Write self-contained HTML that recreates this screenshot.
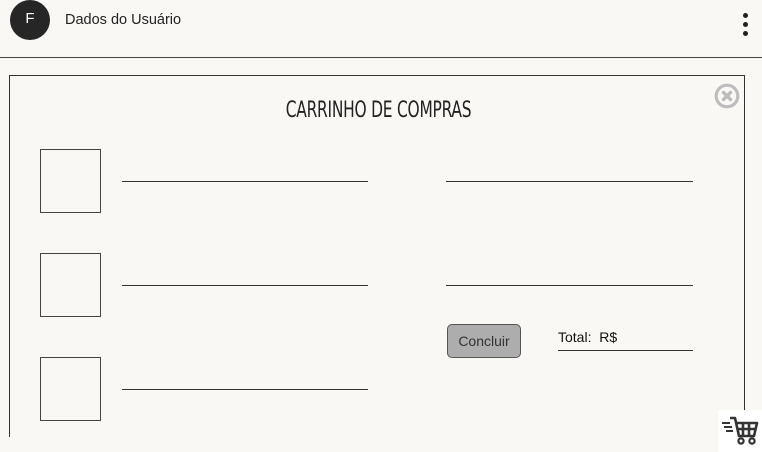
<!DOCTYPE html>
<html><head><meta charset="utf-8"><style>
html,body{margin:0;padding:0;width:762px;height:452px;background:#f9f8f4;overflow:hidden;font-family:"Liberation Sans",sans-serif;position:relative}
.a{position:absolute}
.line{position:absolute;height:0;border-top:1.3px solid #333}
.box{position:absolute;width:61px;height:64px;border:1.3px solid #444;box-sizing:border-box}
</style></head><body>
<div class="a" style="left:10px;top:0;width:40px;height:40px;border-radius:50%;background:#262626;color:#fff;font-size:15px;line-height:38px;text-align:center">F</div>
<div class="a" style="left:65px;top:12px;font-size:14.5px;color:#222">Dados do Usuário</div>
<div class="a" style="left:743px;top:13px;width:5px;height:5px;border-radius:50%;background:#222"></div>
<div class="a" style="left:743px;top:22px;width:5px;height:5px;border-radius:50%;background:#222"></div>
<div class="a" style="left:743px;top:31px;width:5px;height:5px;border-radius:50%;background:#222"></div>
<div class="line" style="left:0;top:57px;width:762px;border-top:1.5px solid #444"></div>
<div class="a" style="left:9px;top:75px;width:736px;height:362px;border:1.3px solid #333;border-bottom:none;box-sizing:border-box"></div>
<div class="a" style="left:0;top:98px;width:757px;text-align:center;font-family:'DejaVu Sans Condensed','Liberation Sans Narrow',sans-serif;font-size:22px;color:#222;letter-spacing:-0.3px;transform:scaleX(0.78)">CARRINHO DE COMPRAS</div>
<svg class="a" style="left:714px;top:83px" width="26" height="26" viewBox="0 0 26 26"><circle cx="13" cy="13" r="10.8" fill="none" stroke="#bdbdbd" stroke-width="3.2"/><path d="M9.5 9.5L16.5 16.5M16.5 9.5L9.5 16.5" stroke="#bdbdbd" stroke-width="3.4" stroke-linecap="round"/></svg>
<div class="box" style="left:40px;top:149px"></div>
<div class="box" style="left:40px;top:253px"></div>
<div class="box" style="left:40px;top:357px"></div>
<div class="line" style="left:122px;top:181px;width:246px"></div>
<div class="line" style="left:122px;top:285px;width:246px"></div>
<div class="line" style="left:122px;top:389px;width:246px"></div>
<div class="line" style="left:446px;top:181px;width:247px"></div>
<div class="line" style="left:446px;top:285px;width:247px"></div>
<div class="a" style="left:447px;top:324px;width:74px;height:34px;box-sizing:border-box;border:1px solid #555;border-radius:5px;background:#adadad;color:#333;font-size:14px;line-height:32px;text-align:center">Concluir</div>
<div class="a" style="left:558px;top:329px;font-size:14px;color:#111">Total:&nbsp; R$</div>
<div class="line" style="left:558px;top:350px;width:135px"></div>
<div class="a" style="left:718px;top:410px;width:44px;height:42px;background:#fff"></div>
<svg class="a" style="left:721px;top:414px" width="38" height="32" viewBox="0 0 38 32"><g stroke="#333" stroke-width="2.6" fill="none" stroke-linejoin="round"><path d="M9 4H14L18 22H33L36 9H15"/><path d="M22 9V22M28 9V22M16 15H35"/></g><circle cx="20" cy="27" r="2.6" fill="none" stroke="#333" stroke-width="2.2"/><circle cx="31" cy="27" r="2.6" fill="none" stroke="#333" stroke-width="2.2"/><path d="M1 9H9M3 13H11M5 17H12" stroke="#333" stroke-width="2"/></svg>
</body></html>
